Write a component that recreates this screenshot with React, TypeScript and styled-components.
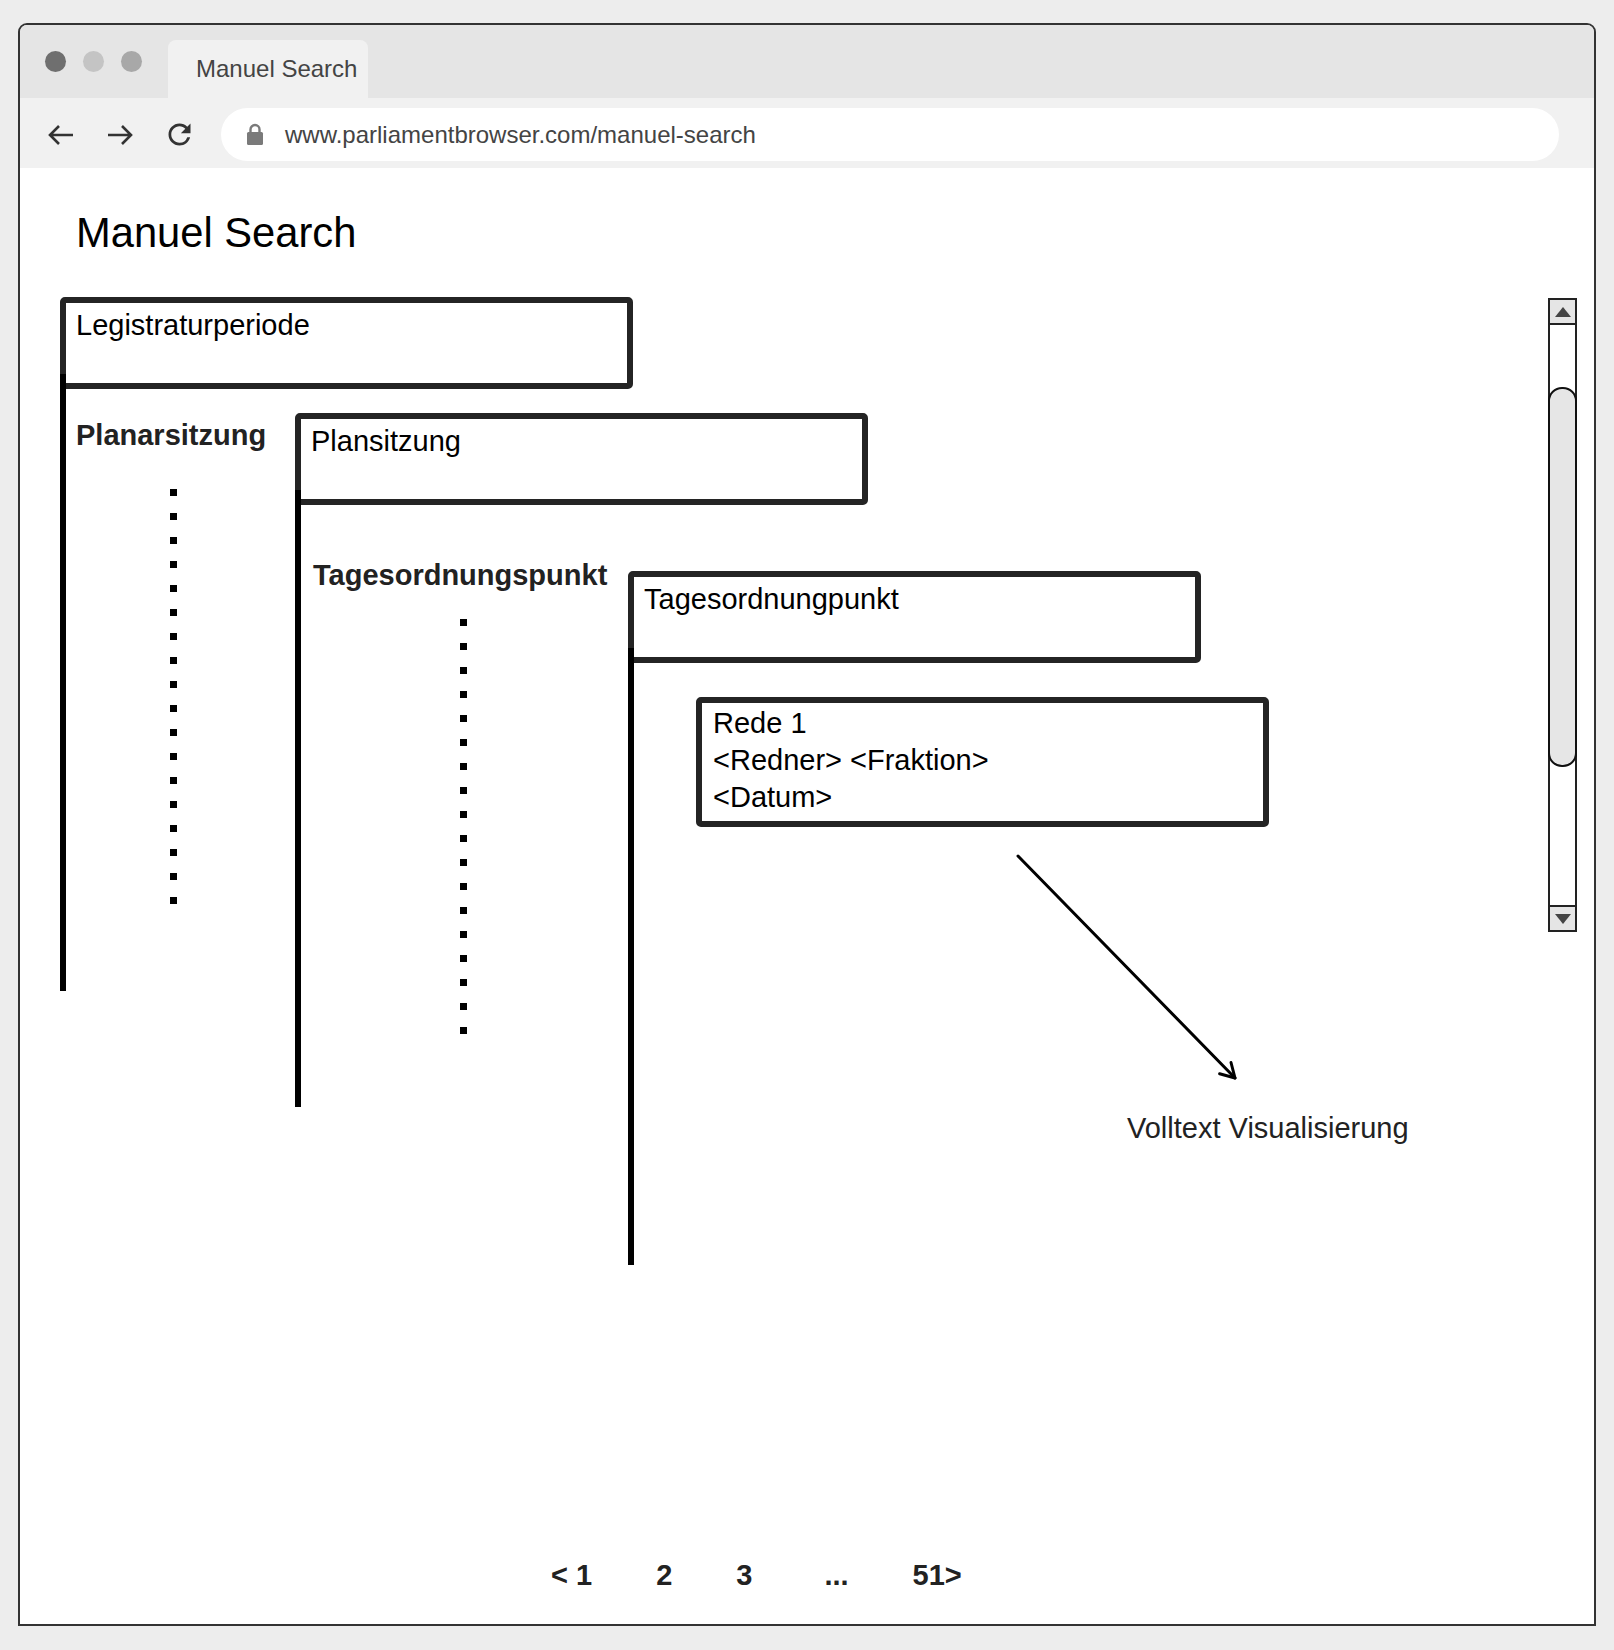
import React from 'react';
import styled, { createGlobalStyle } from 'styled-components';

const GlobalStyle = createGlobalStyle`
	html, body {
		margin: 0;
		padding: 0;
		background: #ededed;
	}
	body {
		font-family: 'Liberation Sans', Arial, Helvetica, sans-serif;
	}
`;

const Window = styled.div`
	box-sizing: border-box;
	width: 1578px;
	height: 1603px;
	margin: 23px 0 0 18px;
	border: 2px solid #333;
	border-radius: 9px 9px 0 0;
	overflow: hidden;
	display: flex;
	flex-direction: column;
	background: #fff;
`;

//
// Browser chrome
//
const TitleBar = styled.div`
	flex-shrink: 0;
	height: 73px;
	display: flex;
	align-items: flex-end;
	padding-left: 25px;
	background: #e5e5e5;
`;

const Dots = styled.div`
	display: flex;
	gap: 17px;
	align-self: center;
	margin-right: 26px;
`;

const Dot = styled.span<{ $color: string }>`
	width: 21px;
	height: 21px;
	border-radius: 50%;
	background: ${(p) => p.$color};
`;

const Tab = styled.div`
	box-sizing: border-box;
	width: 200px;
	height: 58px;
	padding-left: 28px;
	display: flex;
	align-items: center;
	background: #f1f1f1;
	border-radius: 8px 8px 0 0;
	font-size: 24px;
	color: #444;
`;

const Toolbar = styled.div`
	flex-shrink: 0;
	box-sizing: border-box;
	height: 70px;
	padding: 3px 35px 0 24px;
	display: flex;
	align-items: center;
	gap: 25px;
	background: #f1f1f1;
`;

const NavButton = styled.span`
	width: 34px;
	height: 34px;
	display: flex;
	align-items: center;
	justify-content: center;
	color: #333;
`;

const UrlBar = styled.div`
	flex: 1;
	height: 53px;
	padding-left: 25px;
	display: flex;
	align-items: center;
	gap: 21px;
	border-radius: 27px;
	background: #fff;
	font-size: 24px;
	color: #444;
`;

//
// Page content
//
const Content = styled.main`
	flex: 1;
	display: flex;
	flex-direction: column;
	background: #fff;
`;

const Heading = styled.h1`
	margin: 41px 0 0 56px;
	font-size: 41.7px;
	font-weight: normal;
	line-height: 48px;
	color: #000;
`;

const Row = styled.div`
	flex: 1;
	display: flex;
	align-items: flex-start;
`;

const Tree = styled.div`
	flex: 1;
	margin: 40px 0 0 40px;
`;

const Level = styled.div<{ $top?: number }>`
	flex-shrink: 0;
	display: flex;
	flex-direction: column;
	margin-top: ${(p) => p.$top || 0}px;
`;

const HeaderBox = styled.div<{ $height?: number }>`
	box-sizing: border-box;
	width: 573px;
	height: ${(p) => p.$height || 92}px;
	padding: 4px 10px;
	border: 6px solid #242424;
	border-radius: 5px;
	font-size: 29px;
	line-height: 37px;
	color: #000;
`;

const Body = styled.div`
	display: flex;
	align-items: flex-start;
`;

const Stem = styled.div`
	flex-shrink: 0;
	width: 6px;
	height: 617px;
	margin-top: -15px;
	background: #000;
`;

const LabelCol = styled.div<{ $width: number; $top: number; $pad: number }>`
	flex-shrink: 0;
	box-sizing: border-box;
	width: ${(p) => p.$width}px;
	padding: ${(p) => p.$top}px 0 0 ${(p) => p.$pad}px;
	display: flex;
	flex-direction: column;
	align-items: flex-start;
`;

const GroupLabel = styled.div`
	font-size: 29px;
	font-weight: bold;
	line-height: 33px;
	color: #222;
	white-space: nowrap;
`;

const Dotted = styled.div<{ $gap: number; $shift: number }>`
	width: 7px;
	height: 415px;
	margin: ${(p) => p.$gap}px 0 0 ${(p) => p.$shift}px;
	background: repeating-linear-gradient(to bottom, #000 0 7px, transparent 7px 24px);
`;

const Leaf = styled.div`
	display: flex;
	flex-direction: column;
	align-items: flex-start;
	margin-left: 62px;
`;

const SpeechBox = styled(HeaderBox)`
	margin-top: 34px;
	padding: 2px 11px;
`;

const ArrowWrap = styled.div`
	margin: 21px 0 0 315px;
	line-height: 0;
`;

const Note = styled.div`
	margin: 24px 0 0 431px;
	font-size: 29px;
	line-height: 33px;
	color: #222;
	white-space: nowrap;
`;

//
// Scrollbar
//
const Scrollbar = styled.div`
	flex-shrink: 0;
	box-sizing: border-box;
	width: 29px;
	height: 634px;
	margin: 41px 17px 0 0;
	border: 2px solid #222;
	display: flex;
	flex-direction: column;
	background: #fff;
`;

const ScrollButton = styled.div<{ $down?: boolean }>`
	box-sizing: border-box;
	height: 25px;
	display: flex;
	align-items: center;
	justify-content: center;
	background: #e5e5e5;
	${(p) => (p.$down ? 'border-top' : 'border-bottom')}: 2px solid #222;
`;

const Triangle = styled.span<{ $down?: boolean }>`
	width: 0;
	height: 0;
	border-left: 8px solid transparent;
	border-right: 8px solid transparent;
	${(p) => (p.$down ? 'border-top' : 'border-bottom')}: 10px solid #444;
`;

const Track = styled.div`
	flex: 1;
`;

const Thumb = styled.div`
	box-sizing: border-box;
	height: 380px;
	margin: 62px -2px 0;
	border: 2px solid #111;
	border-radius: 14px;
	background: #e6e6e6;
`;

//
// Pagination
//
const Pager = styled.nav`
	display: flex;
	gap: 64px;
	margin: 0 0 32px 531px;
	font-size: 29px;
	font-weight: bold;
	line-height: 33px;
	color: #222;
`;

const PageItem = styled.span<{ $extra?: number }>`
	margin-left: ${(p) => p.$extra || 0}px;
	white-space: pre;
`;

const BackIcon = () => (
	<svg width="28" height="22" viewBox="0 0 28 22" fill="none">
		<path d="M26 11H3M12 2L3 11l9 9" stroke="#333" strokeWidth="2.6" />
	</svg>
);

const ForwardIcon = () => (
	<svg width="28" height="22" viewBox="0 0 28 22" fill="none">
		<path d="M2 11h23M16 2l9 9-9 9" stroke="#333" strokeWidth="2.6" />
	</svg>
);

const ReloadIcon = () => (
	<svg width="33" height="33" viewBox="0 0 24 24">
		<path
			fill="#333"
			d="M17.65 6.35A7.958 7.958 0 0 0 12 4c-4.42 0-7.99 3.58-7.99 8s3.57 8 7.99 8c3.73 0 6.84-2.55 7.73-6h-2.08A5.99 5.99 0 0 1 12 18c-3.31 0-6-2.69-6-6s2.69-6 6-6c1.66 0 3.14.69 4.22 1.78L13 11h7V4l-2.35 2.35z"
		/>
	</svg>
);

const LockIcon = () => (
	<svg width="18" height="23" viewBox="0 0 18 23">
		<path d="M4.5 10V6.5a4.5 4.5 0 0 1 9 0V10" fill="none" stroke="#7a7a7a" strokeWidth="2.4" />
		<rect x="1" y="9" width="16" height="13" rx="1.5" fill="#7a7a7a" />
	</svg>
);

const Arrow = () => (
	<svg width="235" height="240" viewBox="0 0 235 240" fill="none">
		<line x1="7" y1="8" x2="224" y2="230" stroke="#000" strokeWidth="3" strokeLinecap="round" />
		<polyline
			points="208.6,225.7 224,230 220,214.5"
			stroke="#000"
			strokeWidth="3"
			strokeLinecap="round"
			strokeLinejoin="round"
		/>
	</svg>
);

export default function App() {
	return (
		<>
			<GlobalStyle />
			<Window>
				<TitleBar>
					<Dots>
						<Dot $color="#6f6f6f" />
						<Dot $color="#c4c4c4" />
						<Dot $color="#a8a8a8" />
					</Dots>
					<Tab>Manuel Search</Tab>
				</TitleBar>
				<Toolbar>
					<NavButton>
						<BackIcon />
					</NavButton>
					<NavButton>
						<ForwardIcon />
					</NavButton>
					<NavButton>
						<ReloadIcon />
					</NavButton>
					<UrlBar>
						<LockIcon />
						<span>www.parliamentbrowser.com/manuel-search</span>
					</UrlBar>
				</Toolbar>
				<Content>
					<Heading>Manuel Search</Heading>
					<Row>
						<Tree>
							<Level>
								<HeaderBox>Legistraturperiode</HeaderBox>
								<Body>
									<Stem />
									<LabelCol $width={229} $top={30} $pad={10}>
										<GroupLabel>Planarsitzung</GroupLabel>
										<Dotted $gap={37} $shift={94} />
									</LabelCol>
									<Level $top={24}>
										<HeaderBox>Plansitzung</HeaderBox>
										<Body>
											<Stem />
											<LabelCol $width={327} $top={54} $pad={12}>
												<GroupLabel>Tagesordnungspunkt</GroupLabel>
												<Dotted $gap={27} $shift={147} />
											</LabelCol>
											<Level $top={66}>
												<HeaderBox>Tagesordnungpunkt</HeaderBox>
												<Body>
													<Stem />
													<Leaf>
														<SpeechBox $height={130}>
															Rede 1
															<br />
															&lt;Redner&gt; &lt;Fraktion&gt;
															<br />
															&lt;Datum&gt;
														</SpeechBox>
														<ArrowWrap>
															<Arrow />
														</ArrowWrap>
														<Note>Volltext Visualisierung</Note>
													</Leaf>
												</Body>
											</Level>
										</Body>
									</Level>
								</Body>
							</Level>
						</Tree>
						<Scrollbar>
							<ScrollButton>
								<Triangle />
							</ScrollButton>
							<Track>
								<Thumb />
							</Track>
							<ScrollButton $down>
								<Triangle $down />
							</ScrollButton>
						</Scrollbar>
					</Row>
					<Pager>
						<PageItem>{'< 1'}</PageItem>
						<PageItem>2</PageItem>
						<PageItem>3</PageItem>
						<PageItem $extra={8}>...</PageItem>
						<PageItem>51&gt;</PageItem>
					</Pager>
				</Content>
			</Window>
		</>
	);
}
